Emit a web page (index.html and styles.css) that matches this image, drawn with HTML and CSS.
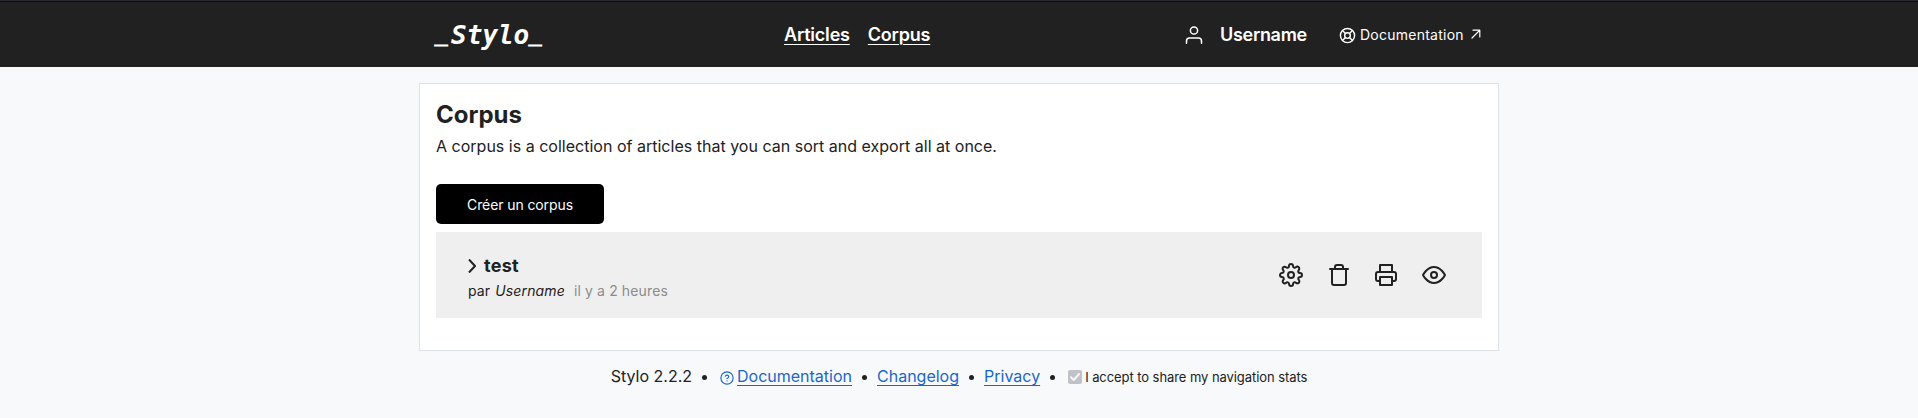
FILE: index.html
```html
<!DOCTYPE html>
<html lang="fr">
<head>
<meta charset="utf-8">
<title>Stylo</title>
<link rel="stylesheet" href="styles.css">
</head>
<body>
<header class="header">
  <div class="header-inner">
    <a class="logo"><span class="dash">_</span><span class="word">Stylo</span><span class="dash">_</span></a>
    <nav class="nav"><a>Articles</a><a>Corpus</a></nav>
    <div class="account">
      <svg class="user-icon" viewBox="0 0 24 24"><path d="M22 23v-3a4 4 0 0 0-4-4H6a4 4 0 0 0-4 4v3"/><circle cx="12" cy="6" r="4.8"/></svg>
      <span class="user">Username</span>
      <svg class="help-icon" viewBox="0 0 24 24"><circle cx="12" cy="12" r="10"/><circle cx="12" cy="12" r="4"/><path d="M4.93 4.93l4.24 4.24M14.83 14.83l4.24 4.24M14.83 9.17l4.24-4.24M4.93 19.07l4.24-4.24"/></svg>
      <span class="doc">Documentation</span>
      <svg class="out-icon" viewBox="0 0 10 10"><path d="M1 9L8.5 1.5M2 1.2h6.8V8"/></svg>
    </div>
  </div>
</header>
<main class="card">
  <h1>Corpus</h1>
  <p class="intro">A corpus is a collection of articles that you can sort and export all at once.</p>
  <button class="create">Créer un corpus</button>
  <article class="item">
    <div>
      <h2><svg class="chevron" viewBox="0 0 8 14"><path d="M1 .5l6 6.5-6 6.5"/></svg>test</h2>
      <p class="meta">par <em>Username</em><time>il y a 2 heures</time></p>
    </div>
    <div class="actions">
      <svg viewBox="0 0 24 24"><circle cx="12" cy="12" r="3"/><path d="M19.4 15a1.65 1.65 0 0 0 .33 1.82l.06.06a2 2 0 0 1 0 2.83 2 2 0 0 1-2.83 0l-.06-.06a1.65 1.65 0 0 0-1.82-.33 1.65 1.65 0 0 0-1 1.51V21a2 2 0 0 1-2 2 2 2 0 0 1-2-2v-.09A1.65 1.65 0 0 0 9 19.4a1.65 1.65 0 0 0-1.82.33l-.06.06a2 2 0 0 1-2.83 0 2 2 0 0 1 0-2.83l.06-.06a1.65 1.65 0 0 0 .33-1.82 1.65 1.65 0 0 0-1.51-1H3a2 2 0 0 1-2-2 2 2 0 0 1 2-2h.09A1.65 1.65 0 0 0 4.6 9a1.65 1.65 0 0 0-.33-1.82l-.06-.06a2 2 0 0 1 0-2.83 2 2 0 0 1 2.83 0l.06.06a1.65 1.65 0 0 0 1.82.33H9a1.65 1.65 0 0 0 1-1.51V3a2 2 0 0 1 2-2 2 2 0 0 1 2 2v.09a1.65 1.65 0 0 0 1 1.51 1.65 1.65 0 0 0 1.82-.33l.06-.06a2 2 0 0 1 2.83 0 2 2 0 0 1 0 2.83l-.06.06a1.65 1.65 0 0 0-.33 1.82V9a1.65 1.65 0 0 0 1.51 1H21a2 2 0 0 1 2 2 2 2 0 0 1-2 2h-.09a1.65 1.65 0 0 0-1.51 1z"/></svg>
      <svg viewBox="0 0 24 24"><path d="M3 6h18M19 6v14a2 2 0 0 1-2 2H7a2 2 0 0 1-2-2V6M8 6V4a2 2 0 0 1 2-2h4a2 2 0 0 1 2 2v2"/></svg>
      <svg viewBox="0 0 24 24"><path d="M6 9V2h12v7M6 18H4a2 2 0 0 1-2-2v-5a2 2 0 0 1 2-2h16a2 2 0 0 1 2 2v5a2 2 0 0 1-2 2h-2M6 14h12v8H6z"/></svg>
      <svg viewBox="0 0 24 24"><path d="M1 12s4-8 11-8 11 8 11 8-4 8-11 8-11-8-11-8z"/><circle cx="12" cy="12" r="3"/></svg>
    </div>
  </article>
</main>
<footer class="footer">
  <span>Stylo 2.2.2</span><i class="dot"></i>
  <svg class="question" viewBox="0 0 24 24"><circle cx="12" cy="12" r="10.5"/><path d="M9.09 9a3 3 0 0 1 5.83 1c0 2-3 3-3 3M12 17h.01"/></svg><a>Documentation</a><i class="dot"></i>
  <a>Changelog</a><i class="dot"></i>
  <a>Privacy</a><i class="dot"></i>
  <svg class="check" viewBox="0 0 14 14"><rect width="14" height="14" rx="2"/><path d="M3 7.2l2.8 2.8L11 4"/></svg><label>I accept to share my navigation stats</label>
</footer>
</body>
</html>
```

FILE: styles.css
```css
* { box-sizing: border-box; }
body { margin: 0; background: #f8f9fb; color: #212121; font: 16px/24px Inter, sans-serif; }
h1, h2, p { margin: 0; }
svg { fill: none; stroke: currentColor; stroke-width: 2; stroke-linecap: round; stroke-linejoin: round; flex: none; }

.header { height: 67px; background: #212121; border-top: 1px solid #2b2a33; box-shadow: inset 0 1px #0c0c0d; color: #fff; }
.header-inner { width: 1048px; height: 66px; margin: 0 auto; padding-top: 2px; display: grid; grid-template-columns: 349px 400px 1fr; align-items: center; }
.logo { display: flex; height: 32px; font: italic bold 26px/32px "DejaVu Sans Mono", monospace; }
.word { width: 78px; margin-left: 3px; }
.dash { display: block; width: 13px; padding-top: 1px; font: bold 22px/32px "Liberation Sans", sans-serif; -webkit-text-stroke: 1.4px #fff; }
.nav { display: flex; gap: 18px; font-size: 18px; font-weight: 600; letter-spacing: -.2px; }
.nav a, .footer a { text-decoration: underline; text-underline-offset: 3px; text-decoration-thickness: 1px; }
.account { display: flex; align-items: center; }
.user-icon { width: 18px; height: 18px; margin-left: 1px; }
.user { width: 88px; margin-left: 17px; font-size: 18px; font-weight: 600; letter-spacing: -.3px; }
.help-icon { width: 17px; height: 17px; margin-left: 31px; }
.doc { margin-left: 4px; font-size: 14px; letter-spacing: .25px; }
.out-icon { width: 10px; height: 10px; margin: -2px 0 0 7px; stroke-width: 1.2; }

.card { width: 1080px; height: 268px; margin: 16px auto 0; padding: 16px; border: 1px solid #dee2e6; background: #fff; }
h1 { font-size: 24px; line-height: 30px; font-weight: 700; }
.intro { margin-top: 4px; letter-spacing: .01px; }
.create { display: block; width: 168px; height: 40px; margin-top: 26px; padding: 0; border: 0; border-radius: 5px; background: #000; color: #fff; font: 14px Inter, sans-serif; letter-spacing: -.1px; }
.item { height: 86px; margin-top: 8px; padding: 20px 32px; background: #efefef; display: flex; justify-content: space-between; }
h2 { display: flex; align-items: center; gap: 8px; padding-top: 1px; font-size: 18px; line-height: 26px; font-weight: 700; letter-spacing: .3px; }
.chevron { width: 8px; height: 14px; stroke-linecap: butt; stroke-linejoin: miter; }
.meta { font-size: 14px; line-height: 26px; margin-top: -1px; letter-spacing: .13px; }
.meta em { margin-left: 1px; }
.meta time { margin-left: 9px; color: #8c8c8c; }
.actions { display: flex; gap: 23.7px; padding-top: 11px; margin-right: 4px; }
.actions svg { width: 24px; height: 24px; }

.footer { margin-top: 12px; display: flex; justify-content: center; align-items: center; }
.footer a { color: #1a67c9; }
.dot { width: 5px; height: 5px; margin: 2px 10px 0; border-radius: 50%; background: #212121; }
.question { width: 14px; height: 14px; margin: 3px 3px 0 3px; color: #1a67c9; }
.check { width: 14px; height: 14px; margin: 1px 3px 0 3px; }
.check rect { fill: #c1c1c9; stroke: none; }
.check path { stroke: #f6f6f8; }
.footer label { font-size: 13px; padding-top: 2px; letter-spacing: -.07px; }
```
